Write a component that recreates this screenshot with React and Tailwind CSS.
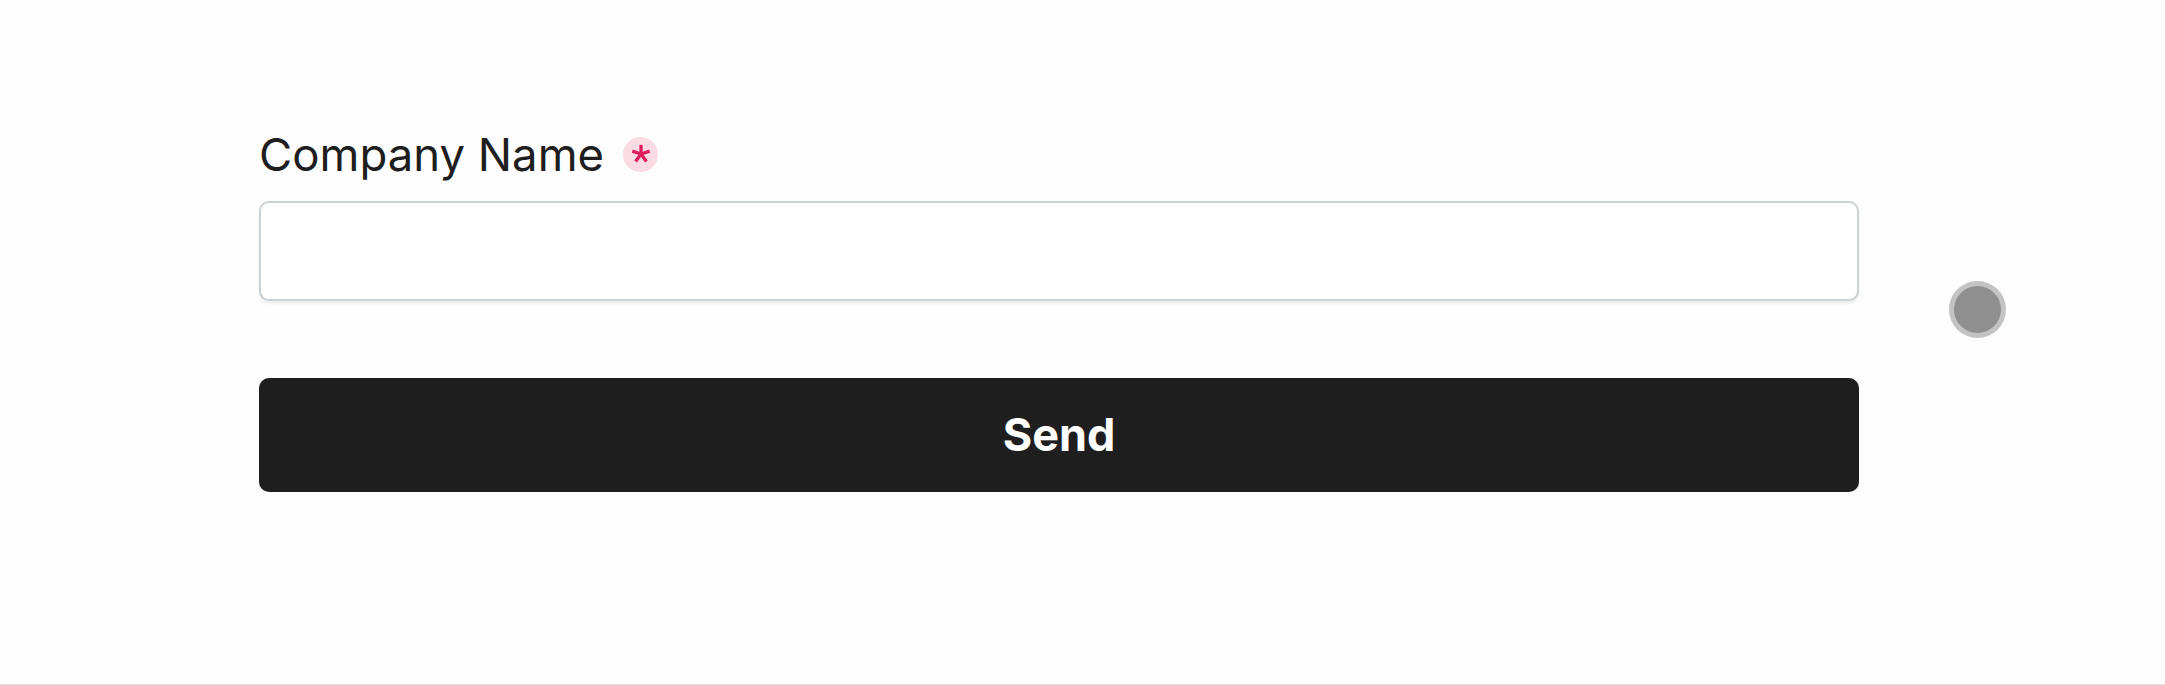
export default function App() {
  return (
    <div className="min-h-[685px] w-full bg-[#fdfdfd] border-b border-[#e2e2e2] font-['Inter','Liberation_Sans',sans-serif]">
      <div className="flex items-start pl-[259px] pt-[128px]">
        {/* Form */}
        <form className="w-[1600px] flex flex-col" onSubmit={(e) => e.preventDefault()}>
          <label className="flex items-center gap-[19px] text-[45.5px] leading-[54px] text-[#1e1e1e]">
            Company Name
            <span className="flex items-center justify-center w-[35px] h-[35px] rounded-full bg-[#fadbe3] -mt-[2px]">
              <svg viewBox="0 0 24 24" className="w-[22px] h-[22px]" fill="none" stroke="#dc1e5a" strokeWidth="3.6" strokeLinecap="butt">
                <path d="M12 2v10" />
                <path d="M12 12l9.5-3.1" />
                <path d="M12 12l-9.5-3.1" />
                <path d="M12 12l5.9 8.1" />
                <path d="M12 12l-5.9 8.1" />
              </svg>
            </span>
          </label>

          <input
            type="text"
            className="mt-[19px] h-[100px] w-full rounded-[10px] border-2 border-[#ccd1d8] bg-white px-4 text-[40px] shadow-[0_3px_2px_rgba(0,0,0,0.06)] outline-none"
          />

          <button
            type="submit"
            className="mt-[77px] h-[114px] w-full rounded-[10px] bg-[#1e1e1e] text-white text-[45px] font-bold"
          >
            Send
          </button>
        </form>

        {/* Floating dot */}
        <div className="ml-[90px] mt-[153px] w-[57px] h-[57px] rounded-full bg-[#c3c3c3] flex items-center justify-center">
          <div className="w-[47px] h-[47px] rounded-full bg-[#8f8f8f]" />
        </div>
      </div>
    </div>
  );
}
